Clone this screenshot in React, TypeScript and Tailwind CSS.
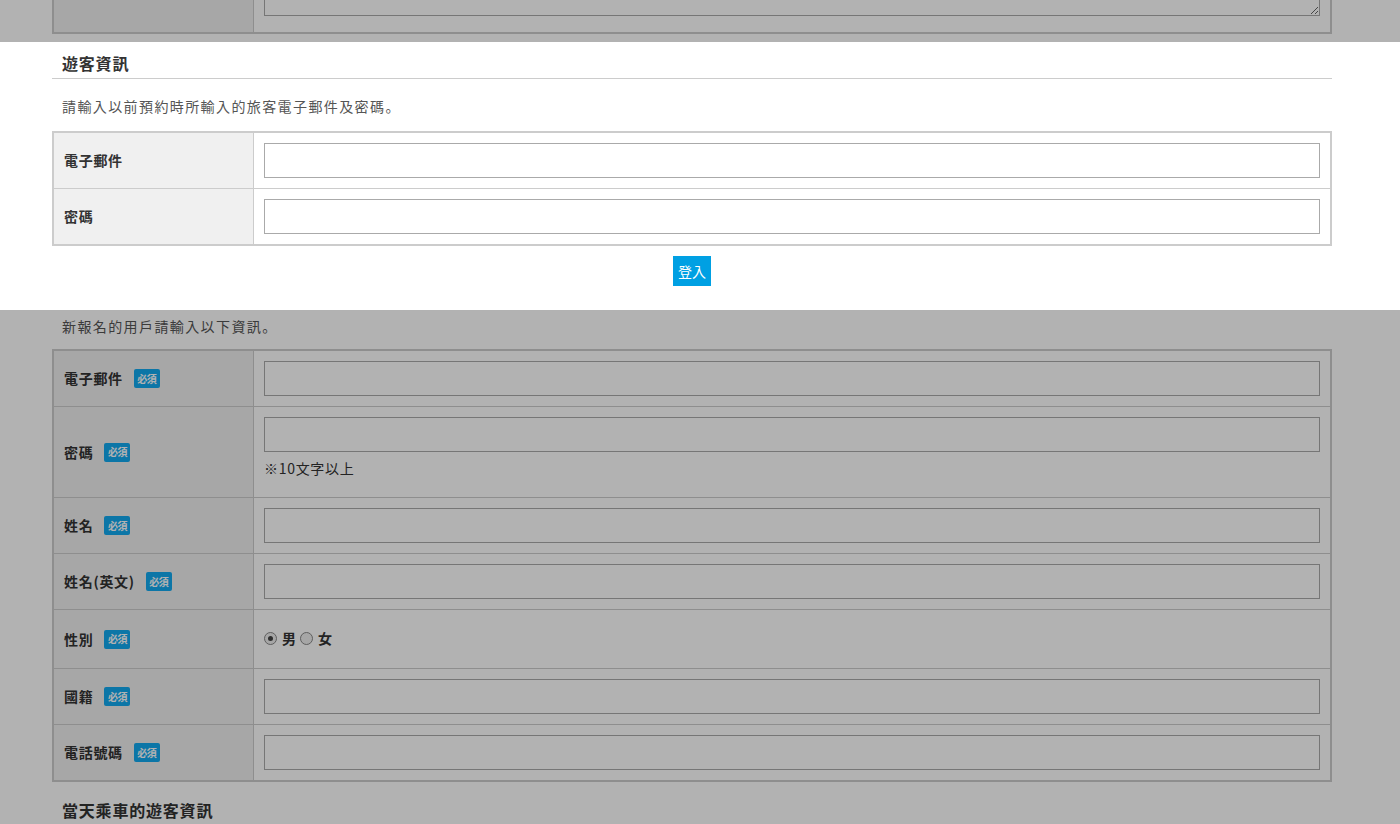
import React from 'react';

// Form page with the guest-login block highlighted over a dim overlay

const Badge: React.FC = () => (
  <span className="ml-[11px] inline-flex h-[19px] w-[26px] shrink-0 items-center justify-center rounded-[2px] bg-[#12a9f0] text-[10px] font-bold leading-none tracking-[-0.5px] text-white">
    必須
  </span>
);

type RowProps = {
  label: string;
  required?: boolean;
  first?: boolean;
  cellClass?: string;
  children: React.ReactNode;
};

const Row: React.FC<RowProps> = ({ label, required, first, cellClass, children }) => (
  <div className={`flex ${first ? '' : 'border-t border-[#ccc]'}`}>
    <div className="flex w-[200px] shrink-0 items-center border-r border-[#ccc] bg-[#f0f0f0] px-[10px] text-[14px] font-bold tracking-[0.05em] text-[#333]">
      {label}
      {required && <Badge />}
    </div>
    <div className={`flex-1 ${cellClass ?? 'p-[10px]'}`}>{children}</div>
  </div>
);

const TextInput: React.FC<{ type?: string }> = ({ type = 'text' }) => (
  <input type={type} className="block h-[35px] w-full border border-[#aaa] bg-white px-2 text-[14px] outline-none" />
);

const Radio: React.FC<{ checked?: boolean; label: string; className?: string }> = ({ checked, label, className }) => (
  <label className={`flex items-center ${className ?? ''}`}>
    <span className="flex h-[13px] w-[13px] items-center justify-center rounded-full border border-[#888] bg-[#eee]">
      {checked && <span className="h-[5px] w-[5px] rounded-full bg-[#444]" />}
    </span>
    <span className="ml-[5px] text-[14px] font-bold text-[#333]">{label}</span>
  </label>
);

export default function App() {
  return (
    <div className="relative h-[824px] overflow-hidden bg-white font-['Noto_Sans_CJK_JP','Noto_Sans_CJK_TC',sans-serif] text-[14px] text-[#333]">
      {/* tail of the previous table (page is scrolled) */}
      <div className="ml-[52px] mt-[-76px] w-[1280px] border-2 border-[#ccc]">
        <div className="flex">
          <div className="w-[200px] shrink-0 border-r border-[#ccc] bg-[#f0f0f0]" />
          <div className="flex-1 px-[10px] pb-[16px] pt-[10px]">
            <textarea className="block h-[80px] w-full border border-[#aaa] bg-white" />
          </div>
        </div>
      </div>

      {/* highlighted block */}
      <div className="relative z-20 mt-[8px] w-full bg-white">
        <div className="ml-[52px] w-[1280px] pb-[24px] pt-[10px]">
          <h2 className="border-b border-[#ccc] px-[10px] pb-[4px] text-[16px] font-bold leading-[22px] tracking-[0.05em] text-[#333]">
            遊客資訊
          </h2>
          <p className="mt-[15px] px-[10px] text-[14px] leading-[24px] tracking-[0.1em] text-[#555]">
            請輸入以前預約時所輸入的旅客電子郵件及密碼。
          </p>
          <div className="mt-[13px] border-2 border-[#ccc]">
            <Row label="電子郵件" first>
              <TextInput />
            </Row>
            <Row label="密碼">
              <TextInput type="password" />
            </Row>
          </div>
          <div className="mt-[10px] flex justify-center">
            <button className="h-[30px] bg-[#00a0e3] px-[5px] text-[14px] leading-[30px] text-white">登入</button>
          </div>
        </div>
      </div>

      {/* new registration */}
      <div className="ml-[52px] w-[1280px]">
        <p className="mt-[4px] px-[10px] text-[14px] leading-[24px] tracking-[0.1em] text-[#555]">
          新報名的用戶請輸入以下資訊。
        </p>
        <div className="mt-[11px] border-2 border-[#ccc]">
          <Row label="電子郵件" required first>
            <TextInput />
          </Row>
          <Row label="密碼" required cellClass="px-[10px] pt-[10px] pb-[17px]">
            <TextInput type="password" />
            <p className="mt-[4px] text-[14px] leading-[24px] tracking-[0.05em] text-[#333]">※10文字以上</p>
          </Row>
          <Row label="姓名" required>
            <TextInput />
          </Row>
          <Row label="姓名(英文)" required>
            <TextInput />
          </Row>
          <Row label="性別" required cellClass="px-[10px] pt-[10px] pb-[12px]">
            <div className="flex h-[36px] items-center">
              <Radio checked label="男" />
              <Radio label="女" className="ml-[4px]" />
            </div>
          </Row>
          <Row label="國籍" required>
            <TextInput />
          </Row>
          <Row label="電話號碼" required>
            <TextInput />
          </Row>
        </div>
        <h2 className="mt-[17px] border-b border-[#ccc] px-[10px] pb-[4px] text-[16px] font-bold leading-[22px] tracking-[0.05em] text-[#333]">
          當天乘車的遊客資訊
        </h2>
      </div>

      {/* dim overlay */}
      <div className="fixed inset-0 z-10 bg-black/30" />
    </div>
  );
}
